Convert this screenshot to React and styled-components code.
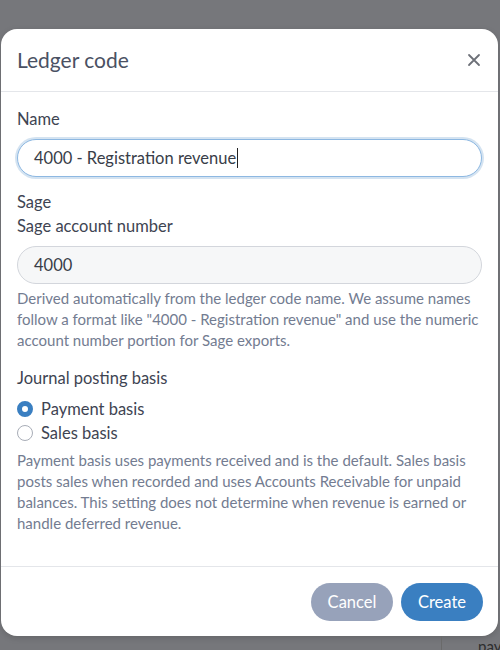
import React from "react";
import styled, { createGlobalStyle } from "styled-components";

const Global = createGlobalStyle`
  html, body { margin: 0; padding: 0; }
  body {
    background: #76777b;
    font-family: "Lato", "Noto Sans", sans-serif;
    width: 500px;
    height: 650px;
    overflow: hidden;
  }
`;

const Page = styled.div`
  padding-top: 29px;
  display: flex;
  flex-direction: column;
`;

const Modal = styled.div`
  margin-left: 1px;
  width: 497px;
  background: #fff;
  border-radius: 16px;
  display: flex;
  flex-direction: column;
  box-shadow: 0 2px 6px rgba(0, 0, 0, 0.15);
`;

const Header = styled.div`
  height: 62px;
  display: flex;
  align-items: center;
  justify-content: space-between;
  padding: 0 16px;
  border-bottom: 1px solid #e4e6ea;
`;

const Title = styled.h2`
  margin: -2px 0 0;
  font-size: 21px;
  font-weight: 400;
  color: #4a5163;
`;

const Close = styled.button`
  border: 0;
  background: none;
  padding: 0;
  width: 24px;
  height: 24px;
  display: flex;
  align-items: center;
  justify-content: center;
  margin-right: -4px;
  color: #6d7078;
`;

const Body = styled.div`
  padding: 15px 16px 32px;
  display: flex;
  flex-direction: column;
`;

const Label = styled.div`
  font-size: 16.5px;
  line-height: 24px;
  color: #3e4452;
  margin-top: ${(p) => p.$mt || 0}px;
`;

const Field = styled.div`
  height: 38px;
  box-sizing: border-box;
  border-radius: 19px;
  display: flex;
  align-items: center;
  padding: 0 16px;
  font-size: 16.5px;
  color: #383d48;
  margin-top: 8px;
  border: 1px solid ${(p) => (p.$focused ? "#8db8e2" : "#d3d6dc")};
  background: ${(p) => (p.$disabled ? "#f6f7f8" : "#fff")};
  box-shadow: ${(p) => (p.$focused ? "0 0 0 2px rgba(58,127,193,0.22)" : "none")};
`;

const Caret = styled.span`
  display: inline-block;
  width: 1px;
  height: 20px;
  background: #222;
  margin-left: 1px;
`;

const Help = styled.p`
  margin: ${(p) => p.$mt}px 0 0;
  font-size: 15px;
  line-height: 21px;
  color: #737c91;
`;

const RadioGroup = styled.div`
  display: flex;
  flex-direction: column;
  margin-top: 7px;
`;

const RadioRow = styled.label`
  display: flex;
  align-items: center;
  gap: 8px;
  height: 24px;
  font-size: 16.5px;
  color: #3e4452;
`;

const RadioDot = styled.span`
  width: 16px;
  height: 16px;
  box-sizing: border-box;
  border-radius: 50%;
  border: ${(p) => (p.$checked ? "5px solid #3a7fc1" : "1px solid #a8adb7")};
  background: #fff;
`;

const Footer = styled.div`
  border-top: 1px solid #e4e6ea;
  padding: 16px 15px 15px 16px;
  display: flex;
  justify-content: flex-end;
  gap: 8px;
`;

const Button = styled.button`
  height: 38px;
  width: 82px;
  border: 0;
  border-radius: 19px;
  font-family: inherit;
  font-size: 16.5px;
  color: #fff;
  background: ${(p) => (p.$primary ? "#3a7fc1" : "#97a2ba")};
`;

const Behind = styled.div`
  margin-left: 441px;
  height: 14px;
  border-left: 1px solid #6a6a6a;
  padding-left: 36px;
  font-size: 15px;
  line-height: 20px;
  color: #2e2e2e;
  overflow: hidden;
`;

export default function App() {
  return (
    <>
      <Global />
      <Page>
        <Modal>
          <Header>
            <Title>Ledger code</Title>
            <Close aria-label="Close">
              <svg width="14" height="14" viewBox="0 0 14 14">
                <path d="M2 2L12 12M12 2L2 12" stroke="currentColor" strokeWidth="1.8" strokeLinecap="round" />
              </svg>
            </Close>
          </Header>
          <Body>
            <Label>Name</Label>
            <Field $focused>
              4000 - Registration revenue
              <Caret />
            </Field>
            <Label $mt={13}>Sage</Label>
            <Label>Sage account number</Label>
            <Field $disabled>4000</Field>
            <Help $mt={4}>
              Derived automatically from the ledger code name. We assume names follow a format like
              "4000 - Registration revenue" and use the numeric account number portion for Sage
              exports.
            </Help>
            <Label $mt={15}>Journal posting basis</Label>
            <RadioGroup>
              <RadioRow>
                <RadioDot $checked />
                Payment basis
              </RadioRow>
              <RadioRow>
                <RadioDot />
                Sales basis
              </RadioRow>
            </RadioGroup>
            <Help $mt={5}>
              Payment basis uses payments received and is the default. Sales basis posts sales when
              recorded and uses Accounts Receivable for unpaid balances. This setting does not
              determine when revenue is earned or handle deferred revenue.
            </Help>
          </Body>
          <Footer>
            <Button>Cancel</Button>
            <Button $primary>Create</Button>
          </Footer>
        </Modal>
        <Behind>pay</Behind>
      </Page>
    </>
  );
}
